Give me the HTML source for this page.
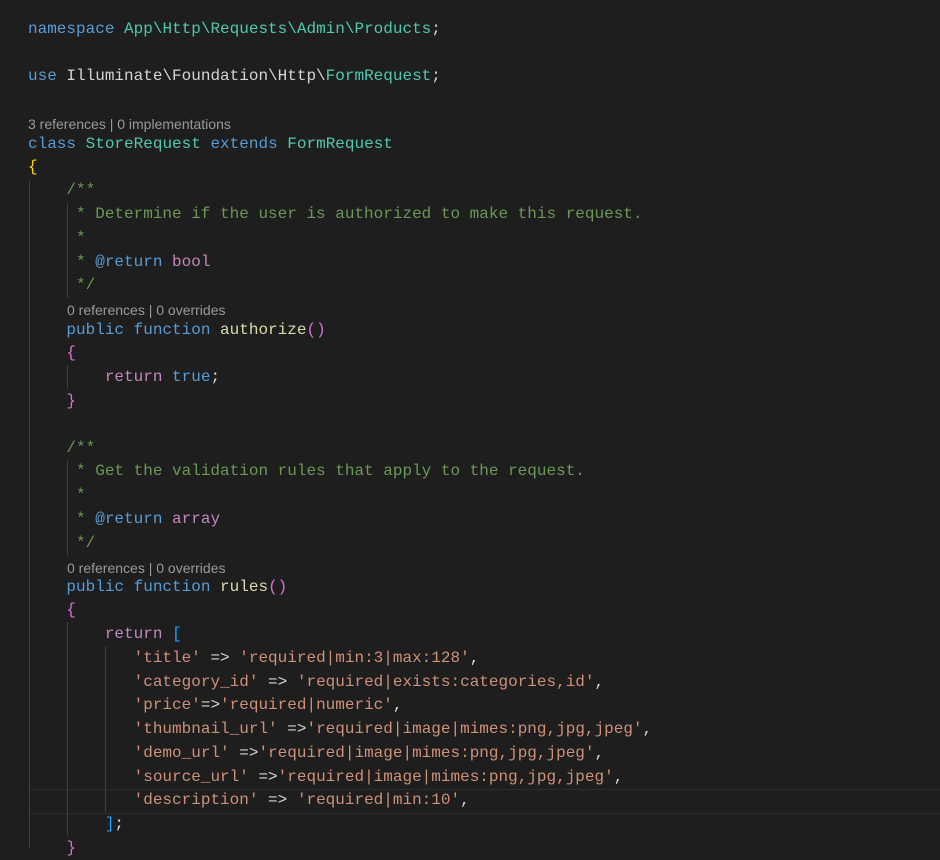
<!DOCTYPE html>
<html><head><meta charset="utf-8"><style>
body{margin:0;background:#1e1e1e;width:940px;height:849px;overflow:hidden;position:relative;font-family:"Liberation Mono",monospace;font-size:16px;color:#d4d4d4}
.l{position:absolute;left:28px;height:24px;line-height:24px;white-space:pre}
.c{position:absolute;height:20px;line-height:20px;font-family:"Liberation Sans",sans-serif;font-size:14px;color:#999;white-space:pre}
.k{color:#569cd6}.t{color:#4ec9b0}.m{color:#6a9955}.s{color:#ce9178}.f{color:#dcdcaa}.p{color:#c586c0}.y{color:#ffd700}.pk{color:#da70d6}.b{color:#179fff}
.g{position:absolute;width:1px;background:#404040}
.cur{position:absolute;left:29px;right:0;top:789px;height:23px;border-top:1px solid #2c2c2c;border-bottom:1px solid #2c2c2c}
</style></head><body>
<div class="cur"></div>
<div class="g" style="left:29px;top:180px;height:669px"></div>
<div class="g" style="left:67px;top:203px;height:95px"></div>
<div class="g" style="left:67px;top:365px;height:24px"></div>
<div class="g" style="left:67px;top:460px;height:95px"></div>
<div class="g" style="left:67px;top:622px;height:214px"></div>
<div class="g" style="left:105px;top:646px;height:166px"></div>
<div class="l" style="top:17px"><span class="k">namespace</span> <span class="t">App\Http\Requests\Admin\Products</span>;</div>
<div class="l" style="top:64px"><span class="k">use</span> Illuminate\Foundation\Http\<span class="t">FormRequest</span>;</div>
<div class="c" style="left:28px;top:114px">3 references | 0 implementations</div>
<div class="l" style="top:132px"><span class="k">class</span> <span class="t">StoreRequest</span> <span class="k">extends</span> <span class="t">FormRequest</span></div>
<div class="l" style="top:155px"><span class="y">{</span></div>
<div class="l" style="top:178px"><span class="m">    /**</span></div>
<div class="l" style="top:202px"><span class="m">     * Determine if the user is authorized to make this request.</span></div>
<div class="l" style="top:226px"><span class="m">     *</span></div>
<div class="l" style="top:250px"><span class="m">     * </span><span class="k">@return</span> <span class="p">bool</span></div>
<div class="l" style="top:273px"><span class="m">     */</span></div>
<div class="c" style="left:67px;top:300px">0 references | 0 overrides</div>
<div class="l" style="top:318px">    <span class="k">public</span> <span class="k">function</span> <span class="f">authorize</span><span class="pk">()</span></div>
<div class="l" style="top:341px">    <span class="pk">{</span></div>
<div class="l" style="top:365px">        <span class="p">return</span> <span class="k">true</span>;</div>
<div class="l" style="top:389px">    <span class="pk">}</span></div>
<div class="l" style="top:436px"><span class="m">    /**</span></div>
<div class="l" style="top:459px"><span class="m">     * Get the validation rules that apply to the request.</span></div>
<div class="l" style="top:483px"><span class="m">     *</span></div>
<div class="l" style="top:507px"><span class="m">     * </span><span class="k">@return</span> <span class="p">array</span></div>
<div class="l" style="top:531px"><span class="m">     */</span></div>
<div class="c" style="left:67px;top:558px">0 references | 0 overrides</div>
<div class="l" style="top:575px">    <span class="k">public</span> <span class="k">function</span> <span class="f">rules</span><span class="pk">()</span></div>
<div class="l" style="top:598px">    <span class="pk">{</span></div>
<div class="l" style="top:622px">        <span class="p">return</span> <span class="b">[</span></div>
<div class="l" style="top:646px">           <span class="s">'title'</span> =&gt; <span class="s">'required|min:3|max:128'</span>,</div>
<div class="l" style="top:670px">           <span class="s">'category_id'</span> =&gt; <span class="s">'required|exists:categories,id'</span>,</div>
<div class="l" style="top:693px">           <span class="s">'price'</span>=&gt;<span class="s">'required|numeric'</span>,</div>
<div class="l" style="top:717px">           <span class="s">'thumbnail_url'</span> =&gt;<span class="s">'required|image|mimes:png,jpg,jpeg'</span>,</div>
<div class="l" style="top:741px">           <span class="s">'demo_url'</span> =&gt;<span class="s">'required|image|mimes:png,jpg,jpeg'</span>,</div>
<div class="l" style="top:765px">           <span class="s">'source_url'</span> =&gt;<span class="s">'required|image|mimes:png,jpg,jpeg'</span>,</div>
<div class="l" style="top:788px">           <span class="s">'description'</span> =&gt; <span class="s">'required|min:10'</span>,</div>
<div class="l" style="top:812px">        <span class="b">]</span>;</div>
<div class="l" style="top:836px">    <span class="pk">}</span></div>
</body></html>
